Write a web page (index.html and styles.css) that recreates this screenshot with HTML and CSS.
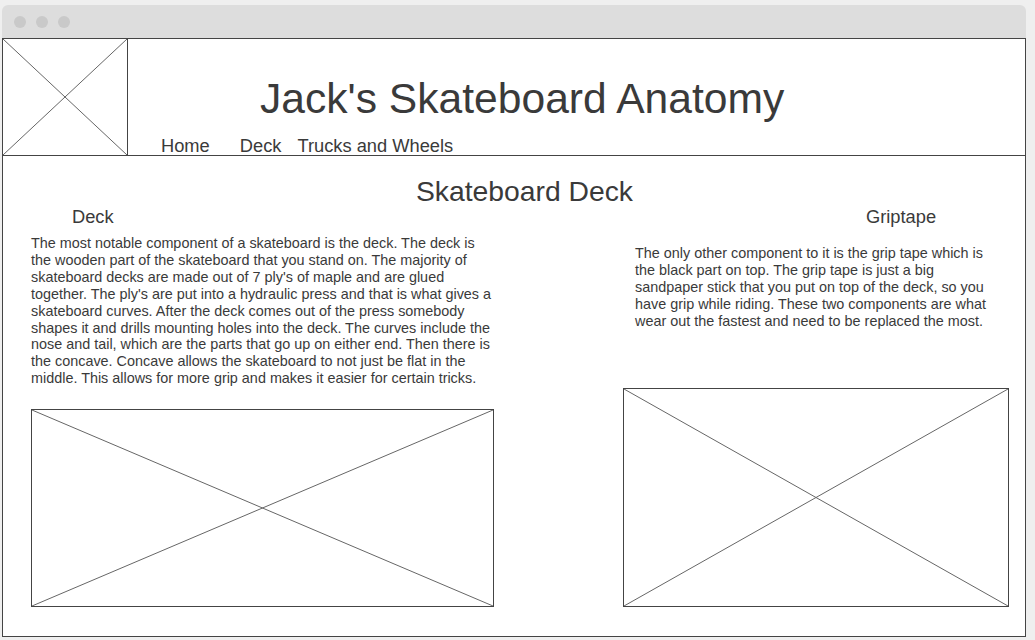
FILE: index.html
```html
<!DOCTYPE html>
<html lang="en">
<head>
<meta charset="utf-8">
<title>Jack's Skateboard Anatomy</title>
<link rel="stylesheet" href="styles.css">
</head>
<body>
<div class="window">
  <div class="chrome">
    <span class="dot"></span><span class="dot"></span><span class="dot"></span>
  </div>
  <div class="page">
    <header class="header">
      <div class="logo">
        <svg class="xbox" width="100%" height="100%"><line x1="0" y1="0" x2="100%" y2="100%"/><line x1="100%" y1="0" x2="0" y2="100%"/></svg>
      </div>
      <div class="head-main">
        <h1 class="title">Jack's Skateboard Anatomy</h1>
        <nav class="nav">
          <a class="nav-home" href="#">Home</a>
          <a class="nav-deck" href="#">Deck</a>
          <a href="#">Trucks and Wheels</a>
        </nav>
      </div>
    </header>
    <main class="content">
      <h2 class="section-title">Skateboard Deck</h2>
      <div class="columns">
        <section class="col">
          <h3 class="col-title col-title-left">Deck</h3>
          <p class="text text-left">The most notable component of a skateboard is the deck. The deck is the wooden part of the skateboard that you stand on. The majority of skateboard decks are made out of 7 ply's of maple and are glued together. The ply's are put into a hydraulic press and that is what gives a skateboard curves. After the deck comes out of the press somebody shapes it and drills mounting holes into the deck. The curves include the nose and tail, which are the parts that go up on either end. Then there is the concave. Concave allows the skateboard to not just be flat in the middle. This allows for more grip and makes it easier for certain tricks.</p>
          <div class="placeholder ph-left">
            <svg class="xbox" width="100%" height="100%"><line x1="0" y1="0" x2="100%" y2="100%"/><line x1="100%" y1="0" x2="0" y2="100%"/></svg>
          </div>
        </section>
        <section class="col">
          <h3 class="col-title col-title-right">Griptape</h3>
          <p class="text text-right">The only other component to it is the grip tape which is the black part on top. The grip tape is just a big sandpaper stick that you put on top of the deck, so you have grip while riding. These two components are what wear out the fastest and need to be replaced the most.</p>
          <div class="placeholder ph-right">
            <svg class="xbox" width="100%" height="100%"><line x1="0" y1="0" x2="100%" y2="100%"/><line x1="100%" y1="0" x2="0" y2="100%"/></svg>
          </div>
        </section>
      </div>
    </main>
  </div>
</div>
</body>
</html>
```

FILE: styles.css
```css
html, body {
  margin: 0;
  padding: 0;
}

body {
  background: #efefef;
  font-family: "Liberation Sans", Arial, sans-serif;
  color: #333;
}

.window {
  margin: 5px 0 0 2px;
  width: 1024px;
}

.chrome {
  height: 33px;
  background: #dddddd;
  border-radius: 6px 6px 0 0;
  display: flex;
  align-items: center;
  gap: 10px;
  padding-left: 12px;
  box-sizing: border-box;
}

.dot {
  width: 12px;
  height: 12px;
  border-radius: 50%;
  background: #c9c9c9;
}

.page {
  height: 599px;
  border: 1px solid #444;
  background: #fff;
  box-sizing: border-box;
}

.header {
  display: flex;
  height: 117px;
  border-bottom: 1px solid #444;
  box-sizing: border-box;
}

.logo {
  width: 125px;
  border-right: 1px solid #444;
  box-sizing: border-box;
}

.xbox {
  display: block;
}

.xbox line {
  stroke: #666;
  stroke-width: 1;
}

.head-main {
  flex: 1;
  padding-top: 35px;
}

.title {
  margin: 0;
  padding-left: 132px;
  font-size: 42.6px;
  font-weight: normal;
  line-height: 48px;
  color: #3a3a3a;
}

.nav {
  display: flex;
  margin-top: 15px;
  padding-left: 33px;
  font-size: 18.3px;
  line-height: 18px;
}

.nav a {
  color: #3a3a3a;
  text-decoration: none;
}

.nav-home {
  margin-right: 30px;
}

.nav-deck {
  margin-right: 16px;
}

.content {
  padding-top: 19px;
}

.section-title {
  margin: 0;
  padding-left: 21px;
  text-align: center;
  font-size: 28.3px;
  font-weight: normal;
  line-height: 32px;
  color: #3a3a3a;
}

.columns {
  display: grid;
  grid-template-columns: 463px 386px;
  column-gap: 129px;
  padding-left: 28px;
}

.col-title {
  margin: 0;
  font-size: 18.3px;
  font-weight: normal;
  line-height: 20px;
  color: #3a3a3a;
}

.col-title-left {
  margin-left: 41px;
}

.col-title-right {
  margin-left: 243px;
}

.text {
  margin: 0;
  font-size: 14.4px;
  line-height: 16.9px;
  color: #3a3a3a;
}

.text-left {
  margin-top: 8px;
}

.text-right {
  margin-top: 18px;
  padding-left: 12px;
  width: 360px;
}

.placeholder {
  border: 1px solid #444;
  box-sizing: border-box;
}

.ph-left {
  margin-top: 22px;
  height: 198px;
}

.ph-right {
  margin-top: 58px;
  height: 219px;
}
```
